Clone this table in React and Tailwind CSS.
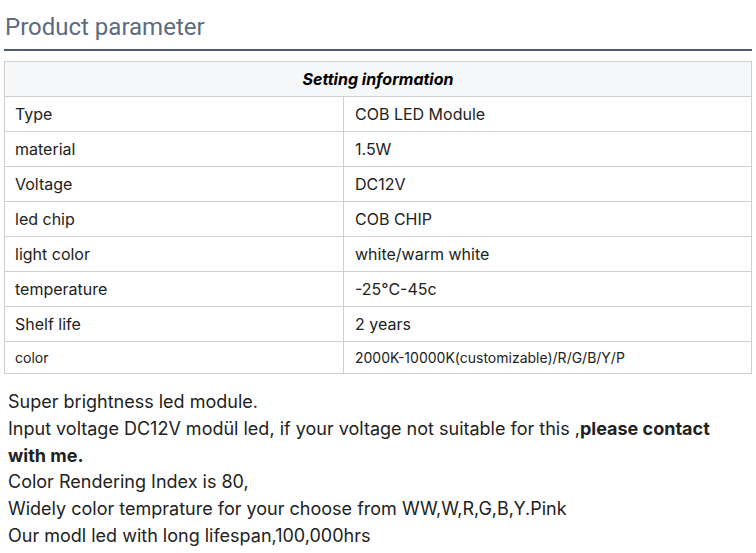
export default function App() {
  const rows = [
    ["Type", "COB LED Module"],
    ["material", "1.5W"],
    ["Voltage", "DC12V"],
    ["led chip", "COB CHIP"],
    ["light color", "white/warm white"],
    ["temperature", "-25°C-45c"],
    ["Shelf life", "2 years"],
  ];
  return (
    <div className="w-[756px] h-[553px] bg-white overflow-hidden" style={{ fontFamily: "Inter, 'Noto Sans', sans-serif" }}>
      <div className="px-[4px]">
        <h2 className="text-[24px] leading-[28px] pt-[13px] pb-[8px] pl-[1px] text-[#5b6b80] border-b-2 border-[#4f5d70]" style={{ fontFamily: "Roboto, sans-serif" }}>
          Product parameter
        </h2>
        <table className="mt-[10px] w-[748px] border-collapse text-[#222] border border-[#cfcfcf]">
          <tbody>
            <tr className="h-[35px] bg-[#f6f7f9]">
              <td colSpan={2} className="border border-[#cfcfcf] text-center font-bold italic text-[16px] text-black">
                Setting information
              </td>
            </tr>
            {rows.map(([k, v]) => (
              <tr key={k} className="h-[35px]">
                <td className="w-[339px] border border-[#cfcfcf] pl-[10px] text-[16px]">{k}</td>
                <td className="border border-[#cfcfcf] pl-[11px] text-[16px]">{v}</td>
              </tr>
            ))}
            <tr className="h-[32px]">
              <td className="w-[339px] border border-[#cfcfcf] pl-[10px] text-[14px]">color</td>
              <td className="border border-[#cfcfcf] pl-[11px] text-[14px]">2000K-10000K(customizable)/R/G/B/Y/P</td>
            </tr>
          </tbody>
        </table>
        <div className="pl-[4px] pr-[20px] pt-[15px] text-[18px] leading-[26.8px] text-[#222]">
          <div>Super brightness led module.</div>
          <div>
            Input voltage DC12V modül led, if your voltage not suitable for this ,<b>please contact with me.</b>
          </div>
          <div>Color Rendering Index is 80,</div>
          <div>Widely color temprature for your choose from WW,W,R,G,B,Y.Pink</div>
          <div>Our modl led with long lifespan,100,000hrs</div>
        </div>
      </div>
    </div>
  );
}
